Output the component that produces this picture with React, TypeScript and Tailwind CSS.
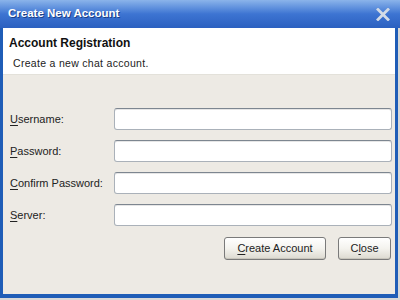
import React from "react";

const font = { fontFamily: '"Liberation Sans", Arial, sans-serif' };

function Field({ label, hot }: { label: string; hot: string }) {
  const rest = label.slice(hot.length);
  return (
    <div className="flex h-[22px] items-center">
      <span className="w-[104px] pt-[1px] text-[11px] text-[#222]">
        <span className="underline underline-offset-2">{hot}</span>
        {rest}
      </span>
      <div className="h-[22px] flex-1 rounded-[3px] border border-[#aab1b9] border-t-[#7d8690] bg-white shadow-[inset_0_1px_0_#e6e6e6]" />
    </div>
  );
}

function Btn({ children, w }: { children: React.ReactNode; w: string }) {
  return (
    <div
      className={`flex h-[23px] ${w} items-center justify-center rounded-[3px] border border-[#7a7a7a] bg-gradient-to-b from-white via-[#f4f3ee] to-[#dcd9d0] text-[11px] text-[#222] shadow-[inset_0_-1px_0_#c8c5bc]`}
    >
      {children}
    </div>
  );
}

export default function App() {
  return (
    <div className="flex h-[300px] w-[400px] flex-col overflow-hidden bg-[#d8d8d8]" style={font}>
      {/* ── Title bar ───────────── */}
      <div className="flex h-[28px] shrink-0 items-center justify-between bg-gradient-to-b from-[#8bb4ea] via-[#3d74d2] to-[#2b60c0] pl-[8px] pr-[10px]">
        <span className="text-[11.5px] font-bold text-white [text-shadow:1px_1px_0_#1d3f86]">
          Create New Account
        </span>
        <svg width="14" height="13" viewBox="0 0 14 13">
          <path d="M2 1.5 L12 11.5 M12 1.5 L2 11.5" stroke="#d3dbe6" strokeWidth="2.8" strokeLinecap="square" />
        </svg>
      </div>

      {/* ── Window frame ────────── */}
      <div className="mb-[2px] mr-[2px] flex flex-1 flex-col border-x-[3px] border-b-[4px] border-[#1f5db7]">
        {/* header */}
        <div className="flex h-[47px] shrink-0 flex-col border-b border-[#e3e1da] bg-white pl-[6px] pt-[6px]">
          <span className="text-[12px] font-bold text-[#111]">Account Registration</span>
          <span className="mt-[4px] pl-[4px] text-[10.5px] tracking-[0.3px] text-[#222]">
            Create a new chat account.
          </span>
        </div>

        {/* body */}
        <div className="flex flex-1 flex-col bg-[#edeae4] pl-[7px] pr-[3px] pt-[33px]">
          <div className="flex flex-col gap-[10px]">
            <Field label="Username:" hot="U" />
            <Field label="Password:" hot="P" />
            <Field label="Confirm Password:" hot="C" />
            <Field label="Server:" hot="S" />
          </div>
          <div className="mt-[11px] flex justify-end gap-[12px] pr-[1px]">
            <Btn w="w-[102px]">
              <span>
                <span className="underline underline-offset-2">C</span>reate Account
              </span>
            </Btn>
            <Btn w="w-[53px]">
              <span>
                C<span className="underline underline-offset-2">l</span>ose
              </span>
            </Btn>
          </div>
        </div>
      </div>
    </div>
  );
}
